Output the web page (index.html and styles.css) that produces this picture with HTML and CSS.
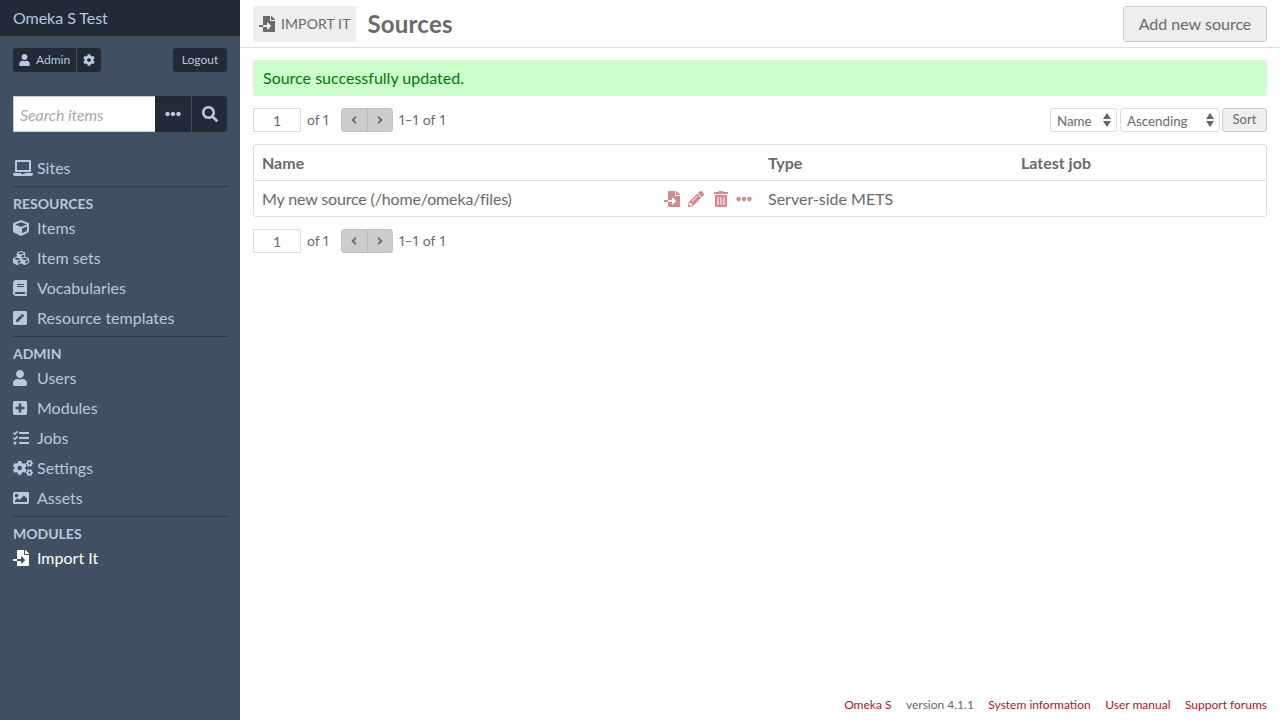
FILE: index.html
```html
<!DOCTYPE html>
<html lang="en">
<head>
<meta charset="utf-8">
<title>Sources · Omeka S Test</title>
<link rel="stylesheet" href="styles.css">
</head>
<body>
<svg class="defs" aria-hidden="true">
<symbol id="i-user" viewBox="0 0 448 512"><path d="M224 256c70.7 0 128-57.3 128-128S294.7 0 224 0 96 57.3 96 128s57.3 128 128 128zm89.6 32h-16.7c-22.2 10.2-46.9 16-72.9 16s-50.6-5.8-72.9-16h-16.7C60.2 288 0 348.2 0 422.4V464c0 26.5 21.5 48 48 48h352c26.5 0 48-21.5 48-48v-41.6c0-74.2-60.2-134.4-134.4-134.4z"/></symbol>
<symbol id="i-search" viewBox="0 0 512 512"><path d="M505 442.7L405.3 343c-4.5-4.5-10.6-7-17-7H372c27.6-35.3 44-79.7 44-128C416 93.1 322.9 0 208 0S0 93.1 0 208s93.1 208 208 208c48.3 0 92.7-16.4 128-44v16.3c0 6.4 2.5 12.5 7 17l99.7 99.7c9.4 9.4 24.6 9.4 33.9 0l28.3-28.3c9.4-9.4 9.4-24.6.1-34zM208 336c-70.7 0-128-57.2-128-128 0-70.7 57.2-128 128-128 70.7 0 128 57.2 128 128 0 70.7-57.2 128-128 128z"/></symbol>
<symbol id="i-dots" viewBox="0 0 512 512"><path d="M328 256c0 39.8-32.2 72-72 72s-72-32.2-72-72 32.2-72 72-72 72 32.2 72 72zm104-72c-39.8 0-72 32.2-72 72s32.2 72 72 72 72-32.2 72-72-32.2-72-72-72zm-352 0c-39.8 0-72 32.2-72 72s32.2 72 72 72 72-32.2 72-72-32.2-72-72-72z"/></symbol>
<symbol id="i-import" viewBox="0 0 512 512"><path d="M16 288c-8.8 0-16 7.2-16 16v32c0 8.8 7.2 16 16 16h112v-64zm489-183L407.1 7c-4.5-4.5-10.6-7-17-7H384v128h128v-6.1c0-6.3-2.5-12.4-7-16.9zm-153 31V0H152c-13.3 0-24 10.7-24 24v264h128v-65.2c0-14.3 17.3-21.4 27.4-11.3L379 308c6.6 6.7 6.6 17.4 0 24l-95.7 96.4c-10.1 10.1-27.4 3-27.4-11.3V352H128v136c0 13.3 10.7 24 24 24h336c13.3 0 24-10.7 24-24V160H376c-13.2 0-24-10.8-24-24z"/></symbol>
<symbol id="i-pencil" viewBox="0 0 512 512"><path d="M497.9 142.1l-46.1 46.1c-4.7 4.7-12.3 4.7-17 0l-111-111c-4.7-4.7-4.7-12.3 0-17l46.1-46.1c18.7-18.7 49.1-18.7 67.9 0l60.1 60.1c18.8 18.7 18.8 49.1 0 67.9zM284.2 99.8L21.6 362.4.4 483.9c-2.9 16.4 11.4 30.6 27.8 27.8l121.5-21.3 262.6-262.6c4.7-4.7 4.7-12.3 0-17l-111-111c-4.8-4.7-12.4-4.7-17.1 0zM124.1 339.9c-5.5-5.5-5.5-14.3 0-19.8l154-154c5.5-5.5 14.3-5.5 19.8 0s5.5 14.3 0 19.8l-154 154c-5.5 5.5-14.3 5.5-19.8 0zM88 424h48v36.3l-64.5 11.3-31.1-31.1L51.7 376H88v48z"/></symbol>
<symbol id="i-trash" viewBox="0 0 448 512"><path d="M32 464a48 48 0 0 0 48 48h288a48 48 0 0 0 48-48V128H32zm272-256a16 16 0 0 1 32 0v224a16 16 0 0 1-32 0zm-96 0a16 16 0 0 1 32 0v224a16 16 0 0 1-32 0zm-96 0a16 16 0 0 1 32 0v224a16 16 0 0 1-32 0zM432 32H312l-9.4-18.7A24 24 0 0 0 281.1 0H166.8a23.72 23.72 0 0 0-21.4 13.3L136 32H16A16 16 0 0 0 0 48v32a16 16 0 0 0 16 16h416a16 16 0 0 0 16-16V48a16 16 0 0 0-16-16z"/></symbol>
<symbol id="i-laptop" viewBox="0 0 640 512"><path d="M624 416H381.54c-.74 19.81-14.71 32-32.74 32H288c-18.69 0-33.02-17.47-32.77-32H16c-8.8 0-16 7.2-16 16v16c0 35.2 28.8 64 64 64h512c35.2 0 64-28.8 64-64v-16c0-8.8-7.2-16-16-16zM576 48c0-26.4-21.6-48-48-48H112C85.6 0 64 21.6 64 48v336h512V48zm-64 272H128V64h384v256z"/></symbol>
<symbol id="i-cube" viewBox="0 0 512 512"><path d="M239.1 6.3l-208 78c-18.7 7-31.1 25-31.1 45v225.1c0 18.2 10.3 34.8 26.5 42.9l208 104c13.5 6.8 29.4 6.8 42.9 0l208-104c16.3-8.1 26.5-24.8 26.5-42.9V129.3c0-20-12.4-37.9-31.1-44.9l-208-78C262 2.2 250 2.2 239.1 6.3zM256 68.4l192 72v1.1l-192 78-192-78v-1.1l192-72zm32 356V275.5l160-65v133.9l-160 80z"/></symbol>
<symbol id="i-cubes" viewBox="0 0 512 512"><path d="M488.6 250.2L392 214V105.5c0-15-9.3-28.4-23.4-33.7l-100-37.5c-8.1-3.1-17.1-3.1-25.3 0l-100 37.5c-14.1 5.3-23.4 18.7-23.4 33.7V214l-96.6 36.2C9.3 255.5 0 268.9 0 283.9V394c0 13.6 7.7 26.1 19.9 32.2l100 50c10.1 5.1 22.1 5.1 32.2 0l103.9-52 103.9 52c10.1 5.1 22.1 5.1 32.2 0l100-50c12.2-6.1 19.9-18.6 19.9-32.2V283.9c0-15-9.3-28.4-23.4-33.7zM358 214.8l-85 31.9v-68.2l85-37v73.3zM154 104.1l102-38.2 102 38.2v.6l-102 41.4-102-41.4v-.6zm84 291.1l-85 42.5v-79.1l85-38.8v75.4zm0-112l-102 41.4-102-41.4v-.6l102-38.2 102 38.2v.6zm240 112l-85 42.5v-79.1l85-38.8v75.4zm0-112l-102 41.4-102-41.4v-.6l102-38.2 102 38.2v.6z"/></symbol>
<symbol id="i-book" viewBox="0 0 448 512"><path d="M448 360V24c0-13.3-10.7-24-24-24H96C43 0 0 43 0 96v320c0 53 43 96 96 96h328c13.3 0 24-10.7 24-24v-16c0-7.5-3.5-14.3-8.9-18.7-4.2-15.4-4.2-59.3 0-74.7 5.4-4.3 8.9-11.1 8.9-18.6zM128 134c0-3.3 2.7-6 6-6h212c3.3 0 6 2.7 6 6v20c0 3.3-2.7 6-6 6H134c-3.3 0-6-2.7-6-6v-20zm0 64c0-3.3 2.7-6 6-6h212c3.3 0 6 2.7 6 6v20c0 3.3-2.7 6-6 6H134c-3.3 0-6-2.7-6-6v-20zm253.4 250H96c-17.7 0-32-14.3-32-32 0-17.6 14.4-32 32-32h285.4c-1.9 17.1-1.9 46.9 0 64z"/></symbol>
<symbol id="i-pensq" viewBox="0 0 448 512"><path d="M400 480H48c-26.5 0-48-21.5-48-48V80c0-26.5 21.5-48 48-48h352c26.5 0 48 21.5 48 48v352c0 26.5-21.5 48-48 48zM238.1 177.9L102.4 313.6l-6.3 57.1c-.8 7.6 5.6 14.1 13.3 13.3l57.1-6.3L302.2 242c2.3-2.3 2.3-6.1 0-8.5L246.7 178c-2.5-2.4-6.3-2.4-8.6-.1zM345 165.1L314.9 135c-9.4-9.4-24.6-9.4-33.9 0l-23.1 23.1c-2.3 2.3-2.3 6.1 0 8.5l55.5 55.5c2.3 2.3 6.1 2.3 8.5 0L345 199c9.3-9.3 9.3-24.5 0-33.9z"/></symbol>
<symbol id="i-plus" viewBox="0 0 448 512"><path d="M400 32H48C21.5 32 0 53.5 0 80v352c0 26.5 21.5 48 48 48h352c26.5 0 48-21.5 48-48V80c0-26.5-21.5-48-48-48zm-32 252c0 6.6-5.4 12-12 12h-92v92c0 6.6-5.4 12-12 12h-56c-6.6 0-12-5.4-12-12v-92H92c-6.6 0-12-5.4-12-12v-56c0-6.6 5.4-12 12-12h92v-92c0-6.6 5.4-12 12-12h56c6.6 0 12 5.4 12 12v92h92c6.6 0 12 5.4 12 12v56z"/></symbol>
<symbol id="i-tasks" viewBox="0 0 512 512"><path d="M139.61 35.5a12 12 0 0 0-17 0L58.93 98.81l-22.7-22.12a12 12 0 0 0-17 0L3.53 92.41a12 12 0 0 0 0 17l47.59 47.4a12.78 12.78 0 0 0 17.61 0l15.59-15.62L156.52 69a12.09 12.09 0 0 0 .09-17zm0 159.19a12 12 0 0 0-17 0l-63.68 63.72-22.7-22.1a12 12 0 0 0-17 0L3.53 252a12 12 0 0 0 0 17L51 316.5a12.77 12.77 0 0 0 17.6 0l15.7-15.69 72.2-72.22a12 12 0 0 0 .09-16.9zM64 368c-26.49 0-48.59 21.5-48.59 48S37.53 464 64 464a48 48 0 0 0 0-96zm432 16H208a16 16 0 0 0-16 16v32a16 16 0 0 0 16 16h288a16 16 0 0 0 16-16v-32a16 16 0 0 0-16-16zm0-320H208a16 16 0 0 0-16 16v32a16 16 0 0 0 16 16h288a16 16 0 0 0 16-16V80a16 16 0 0 0-16-16zm0 160H208a16 16 0 0 0-16 16v32a16 16 0 0 0 16 16h288a16 16 0 0 0 16-16v-32a16 16 0 0 0-16-16z"/></symbol>
<symbol id="i-cogs" viewBox="0 0 640 512"><path d="M512.1 191l-8.2 14.3c-3 5.3-9.4 7.5-15.1 5.4-11.8-4.4-22.6-10.7-32.1-18.6-4.6-3.8-5.8-10.5-2.8-15.7l8.2-14.3c-6.9-8-12.3-17.3-15.9-27.4h-16.5c-6 0-11.2-4.3-12.2-10.3-2-12-2.1-24.6 0-37.1 1-6 6.2-10.4 12.2-10.4h16.5c3.6-10.1 9-19.4 15.9-27.4l-8.2-14.3c-3-5.2-1.9-11.9 2.8-15.7 9.5-7.9 20.4-14.2 32.1-18.6 5.7-2.1 12.1.1 15.1 5.4l8.2 14.3c10.5-1.9 21.2-1.9 31.7 0L552 6.3c3-5.3 9.4-7.5 15.1-5.4 11.8 4.4 22.6 10.7 32.1 18.6 4.6 3.8 5.8 10.5 2.8 15.7l-8.2 14.3c6.9 8 12.3 17.3 15.9 27.4h16.5c6 0 11.2 4.3 12.2 10.3 2 12 2.1 24.6 0 37.1-1 6-6.2 10.4-12.2 10.4h-16.5c-3.6 10.1-9 19.4-15.9 27.4l8.2 14.3c3 5.2 1.9 11.9-2.8 15.7-9.5 7.9-20.4 14.2-32.1 18.6-5.7 2.1-12.1-.1-15.1-5.4l-8.2-14.3c-10.4 1.9-21.2 1.9-31.7 0zm-10.5-58.8c38.5 29.6 82.4-14.3 52.8-52.8-38.5-29.7-82.4 14.3-52.8 52.8zM386.3 286.1l33.7 16.8c10.1 5.8 14.5 18.1 10.5 29.1-8.9 24.2-26.4 46.4-42.6 65.8-7.4 8.9-20.2 11.1-30.3 5.3l-29.1-16.8c-16 13.7-34.6 24.6-54.9 31.7v33.6c0 11.6-8.3 21.6-19.7 23.6-24.6 4.2-50.4 4.4-75.9 0-11.5-2-20-11.9-20-23.6V418c-20.3-7.2-38.9-18-54.9-31.7L74 403c-10 5.8-22.9 3.6-30.3-5.3-16.2-19.4-33.3-41.6-42.2-65.7-4-10.9.4-23.2 10.5-29.1l33.3-16.8c-3.9-20.9-3.9-42.4 0-63.4L12 205.8c-10.1-5.8-14.6-18.1-10.5-29 8.9-24.2 26-46.4 42.2-65.8 7.4-8.9 20.2-11.1 30.3-5.3l29.1 16.8c16-13.7 34.6-24.6 54.9-31.7V57.1c0-11.5 8.2-21.5 19.6-23.5 24.6-4.2 50.5-4.4 76-.1 11.5 2 20 11.9 20 23.6v33.6c20.3 7.2 38.9 18 54.9 31.7l29.1-16.8c10-5.8 22.9-3.6 30.3 5.3 16.2 19.4 33.2 41.6 42.1 65.8 4 10.9.1 23.2-10 29.1l-33.7 16.8c3.9 21 3.9 42.5 0 63.5zm-117.6 21.1c59.2-77-28.7-164.9-105.7-105.7-59.2 77 28.7 164.9 105.7 105.7zm243.4 182.7l-8.2 14.3c-3 5.3-9.4 7.5-15.1 5.4-11.8-4.4-22.6-10.7-32.1-18.6-4.6-3.8-5.8-10.5-2.8-15.7l8.2-14.3c-6.9-8-12.3-17.3-15.9-27.4h-16.5c-6 0-11.2-4.3-12.2-10.3-2-12-2.1-24.6 0-37.1 1-6 6.2-10.4 12.2-10.4h16.5c3.6-10.1 9-19.4 15.9-27.4l-8.2-14.3c-3-5.2-1.9-11.9 2.8-15.7 9.5-7.9 20.4-14.2 32.1-18.6 5.7-2.1 12.1.1 15.1 5.4l8.2 14.3c10.5-1.9 21.2-1.9 31.7 0l8.2-14.3c3-5.3 9.4-7.5 15.1-5.4 11.8 4.4 22.6 10.7 32.1 18.6 4.6 3.8 5.8 10.5 2.8 15.7l-8.2 14.3c6.9 8 12.3 17.3 15.9 27.4h16.5c6 0 11.2 4.3 12.2 10.3 2 12 2.1 24.6 0 37.1-1 6-6.2 10.4-12.2 10.4h-16.5c-3.6 10.1-9 19.4-15.9 27.4l8.2 14.3c3 5.2 1.9 11.9-2.8 15.7-9.5 7.9-20.4 14.2-32.1 18.6-5.7 2.1-12.1-.1-15.1-5.4l-8.2-14.3c-10.4 1.9-21.2 1.9-31.7 0zM501.6 431c38.5 29.6 82.4-14.3 52.8-52.8-38.5-29.6-82.4 14.3-52.8 52.8z"/></symbol>
<symbol id="i-image" viewBox="0 0 512 512"><path d="M464 448H48c-26.51 0-48-21.49-48-48V112c0-26.51 21.49-48 48-48h416c26.51 0 48 21.49 48 48v288c0 26.51-21.49 48-48 48zM112 120c-30.928 0-56 25.072-56 56s25.072 56 56 56 56-25.072 56-56-25.072-56-56-56zM64 384h384V272l-87.515-87.515c-4.686-4.686-12.284-4.686-16.971 0L208 320l-55.515-55.515c-4.686-4.686-12.284-4.686-16.971 0L64 336v48z"/></symbol>
<symbol id="i-cog" viewBox="0 0 512 512"><path d="M487.4 315.7l-42.6-24.6c4.3-23.2 4.3-47 0-70.2l42.6-24.6c4.9-2.8 7.1-8.6 5.5-14-11.1-35.6-30-67.8-54.7-94.6-3.8-4.1-10-5.1-14.8-2.3L380.8 110c-17.9-15.4-38.5-27.3-60.8-35.1V25.8c0-5.6-3.9-10.5-9.4-11.7-36.7-8.2-74.3-7.8-109.2 0-5.5 1.2-9.4 6.1-9.4 11.7V75c-22.2 7.9-42.8 19.8-60.8 35.1L88.7 85.5c-4.9-2.8-11-1.9-14.8 2.3-24.7 26.7-43.6 58.9-54.7 94.6-1.7 5.4.6 11.2 5.5 14L67.3 221c-4.3 23.2-4.3 47 0 70.2l-42.6 24.6c-4.9 2.8-7.1 8.6-5.5 14 11.1 35.6 30 67.8 54.7 94.6 3.8 4.1 10 5.1 14.8 2.3l42.6-24.6c17.9 15.4 38.5 27.3 60.8 35.1v49.2c0 5.6 3.9 10.5 9.4 11.7 36.7 8.2 74.3 7.8 109.2 0 5.5-1.2 9.4-6.1 9.4-11.7v-49.2c22.2-7.9 42.8-19.8 60.8-35.1l42.6 24.6c4.9 2.8 11 1.9 14.8-2.3 24.7-26.7 43.6-58.9 54.7-94.6 1.5-5.5-.7-11.3-5.6-14.1zM256 336c-44.1 0-80-35.9-80-80s35.9-80 80-80 80 35.9 80 80-35.9 80-80 80z"/></symbol>
<symbol id="i-left" viewBox="0 0 256 512"><path d="M31.7 239l136-136c9.4-9.4 24.6-9.4 33.9 0l22.6 22.6c9.4 9.4 9.4 24.6 0 33.9L127.9 256l96.4 96.4c9.4 9.4 9.4 24.6 0 33.9L201.7 409c-9.4 9.4-24.6 9.4-33.9 0l-136-136c-9.5-9.4-9.5-24.6-.1-34z"/></symbol>
<symbol id="i-right" viewBox="0 0 256 512"><path d="M224.3 273l-136 136c-9.4 9.4-24.6 9.4-33.9 0l-22.6-22.6c-9.4-9.4-9.4-24.6 0-33.9l96.4-96.4-96.4-96.4c-9.4-9.4-9.4-24.6 0-33.9L54.3 103c9.4-9.4 24.6-9.4 33.9 0l136 136c9.5 9.4 9.5 24.6.1 34z"/></symbol>
</svg>

<div class="app">
  <aside class="sidebar">
    <div class="site-title">Omeka S Test</div>
    <div class="user-bar">
      <div class="user-group">
        <a class="dark-btn user-btn"><svg class="ic-user"><use href="#i-user"/></svg>Admin</a>
        <a class="dark-btn cog-btn"><svg class="ic-cog"><use href="#i-cog"/></svg></a>
      </div>
      <a class="dark-btn logout">Logout</a>
    </div>
    <form class="search">
      <input class="search-input" type="text" placeholder="Search items">
      <span class="search-btn more"><svg class="ic-more"><use href="#i-dots"/></svg></span>
      <span class="search-btn go"><svg class="ic-go"><use href="#i-search"/></svg></span>
    </form>
    <nav class="nav">
      <a class="nav-item"><span class="nav-icon"><svg class="w20"><use href="#i-laptop"/></svg></span>Sites</a>
      <section class="nav-section">
        <h4 class="nav-heading">Resources</h4>
        <a class="nav-item"><span class="nav-icon"><svg class="w16"><use href="#i-cube"/></svg></span>Items</a>
        <a class="nav-item"><span class="nav-icon"><svg class="w16"><use href="#i-cubes"/></svg></span>Item sets</a>
        <a class="nav-item"><span class="nav-icon"><svg class="w14"><use href="#i-book"/></svg></span>Vocabularies</a>
        <a class="nav-item"><span class="nav-icon"><svg class="w14"><use href="#i-pensq"/></svg></span>Resource templates</a>
      </section>
      <section class="nav-section">
        <h4 class="nav-heading">Admin</h4>
        <a class="nav-item"><span class="nav-icon"><svg class="w14"><use href="#i-user"/></svg></span>Users</a>
        <a class="nav-item"><span class="nav-icon"><svg class="w14"><use href="#i-plus"/></svg></span>Modules</a>
        <a class="nav-item"><span class="nav-icon"><svg class="w16"><use href="#i-tasks"/></svg></span>Jobs</a>
        <a class="nav-item"><span class="nav-icon"><svg class="w20"><use href="#i-cogs"/></svg></span>Settings</a>
        <a class="nav-item"><span class="nav-icon"><svg class="w16"><use href="#i-image"/></svg></span>Assets</a>
      </section>
      <section class="nav-section">
        <h4 class="nav-heading">Modules</h4>
        <a class="nav-item active"><span class="nav-icon"><svg class="w16"><use href="#i-import"/></svg></span>Import It</a>
      </section>
    </nav>
  </aside>

  <main class="main">
    <header class="page-head">
      <div class="crumb"><svg class="crumb-ic"><use href="#i-import"/></svg>IMPORT IT</div>
      <h1 class="page-title">Sources</h1>
      <a class="add-btn">Add new source</a>
    </header>
    <div class="content">
      <div class="message">Source successfully updated.</div>
      <div class="toolbar">
        <div class="pager">
          <input class="page-input" type="text" value="1">
          <span class="of">of 1</span>
          <span class="pager-btns">
            <span class="pager-btn"><svg><use href="#i-left"/></svg></span>
            <span class="pager-btn"><svg><use href="#i-right"/></svg></span>
          </span>
          <span class="range">1–1 of 1</span>
        </div>
        <div class="sorter">
          <select class="sort-select name"><option>Name</option></select>
          <select class="sort-select order"><option>Ascending</option></select>
          <span class="sort-btn">Sort</span>
        </div>
      </div>
      <table class="table">
        <thead>
          <tr><th class="c-name">Name</th><th class="c-type">Type</th><th>Latest job</th></tr>
        </thead>
        <tbody>
          <tr>
            <td>
              <div class="name-cell">
                <span class="source-name">My new source (/home/omeka/files)</span>
                <span class="actions">
                  <svg class="a-import"><use href="#i-import"/></svg>
                  <svg class="a-pencil"><use href="#i-pencil"/></svg>
                  <svg class="a-trash"><use href="#i-trash"/></svg>
                  <svg class="a-dots"><use href="#i-dots"/></svg>
                </span>
              </div>
            </td>
            <td>Server-side METS</td>
            <td></td>
          </tr>
        </tbody>
      </table>
      <div class="pager bottom">
        <input class="page-input" type="text" value="1">
        <span class="of">of 1</span>
        <span class="pager-btns">
          <span class="pager-btn"><svg><use href="#i-left"/></svg></span>
          <span class="pager-btn"><svg><use href="#i-right"/></svg></span>
        </span>
        <span class="range">1–1 of 1</span>
      </div>
    </div>
    <footer class="footer">
      <a>Omeka S</a>
      <span>version 4.1.1</span>
      <a>System information</a>
      <a>User manual</a>
      <a>Support forums</a>
    </footer>
  </main>
</div>
</body>
</html>
```

FILE: styles.css
```css
* { box-sizing: border-box; }
html, body { margin: 0; height: 100%; }
body {
  font-family: Lato, "Open Sans", sans-serif;
  font-size: 16px;
  color: #6a6a6a;
  background: #fff;
  overflow: hidden;
}
svg { fill: currentColor; display: block; }
.defs { position: absolute; width: 0; height: 0; }
.app { display: flex; height: 720px; }

/* sidebar */
.sidebar {
  width: 240px;
  flex: none;
  background: #404f62;
  color: #b8c8de;
}
.site-title {
  height: 36px;
  padding-left: 13px;
  line-height: 36px;
  background: #212a36;
  color: #b8c8de;
  font-size: 16px;
  letter-spacing: -0.05px;
}
.user-bar {
  display: flex;
  justify-content: space-between;
  padding: 12px 13px 0;
}
.user-group { display: flex; gap: 1px; }
.dark-btn {
  display: flex;
  align-items: center;
  height: 24px;
  padding-bottom: 2px;
  background: #212a36;
  border-radius: 3px;
  font-size: 12px;
  color: #b8c8de;
}
.user-btn { width: 63px; padding-left: 6px; border-radius: 3px 0 0 3px; }
.ic-user { width: 11px; height: 12px; margin: 2px 6px 0 0; }
.cog-btn { width: 24px; padding-bottom: 0; justify-content: center; border-radius: 0 3px 3px 0; }
.ic-cog { width: 12px; height: 12px; }
.logout { width: 54px; justify-content: center; }
.search { display: flex; padding: 24px 13px 0; }
.search-input {
  width: 142px;
  height: 36px;
  padding: 0 6px;
  border: 1px solid #ccc;
  border-right: 0;
  background: #fff;
  font: italic 16px Lato, sans-serif;
  letter-spacing: -0.08px;
  outline: none;
}
.search-input::placeholder { color: #aaa; opacity: 1; }
.search-btn {
  display: flex;
  align-items: center;
  justify-content: center;
  height: 36px;
  background: #212a36;
  color: #b8c8de;
}
.more { width: 37px; padding-right: 1px; border-right: 1px solid #404e61; }
.ic-more { width: 16px; height: 16px; }
.go { width: 35px; border-radius: 0 3px 3px 0; }
.ic-go { width: 16px; height: 16px; }

.nav { padding: 20px 12px 0 13px; }
.nav-item {
  display: flex;
  align-items: center;
  height: 30px;
  color: #b8c8de;
  white-space: nowrap;
}
.nav-icon { width: 24px; flex: none; padding-top: 2px; }
.w20 { width: 20px; height: 16px; }
.w16 { width: 16px; height: 16px; }
.w14 { width: 14px; height: 16px; }
.nav-item.active { color: #fff; }
.nav-section { border-top: 1px solid #2f3a49; margin-top: 4px; padding-top: 7px; }
.nav-heading {
  margin: 0;
  height: 18px;
  line-height: 20px;
  font-size: 14px;
  font-weight: 700;
  text-transform: uppercase;
  color: #b8c8de;
}

/* main */
.main { flex: 1; min-width: 0; display: flex; flex-direction: column; }
.page-head {
  display: flex;
  align-items: center;
  height: 48px;
  padding: 0 13px;
  border-bottom: 1px solid #ddd;
}
.crumb {
  display: flex;
  align-items: center;
  height: 36px;
  padding: 0 5px 0 6px;
  background: #eee;
  font-size: 14px;
  letter-spacing: 0.1px;
}
.crumb-ic { width: 16px; height: 16px; margin-right: 6px; }
.page-title { margin: 0 0 0 12px; font-size: 24px; font-weight: 700; letter-spacing: 0.2px; }
.add-btn {
  margin-left: auto;
  display: flex;
  align-items: center;
  justify-content: center;
  width: 144px;
  height: 36px;
  background: #eee;
  border: 1px solid #ccc;
  border-radius: 3px;
}
.content { padding: 12px 13px 0; flex: 1; }
.message {
  height: 36px;
  line-height: 36px;
  padding-left: 10px;
  background: #cfc;
  color: #070;
  border-radius: 3px;
}
.toolbar { display: flex; justify-content: space-between; margin-top: 12px; }
.pager { display: flex; align-items: center; height: 24px; font-size: 14px; font-variant-numeric: proportional-nums; }
.pager.bottom { margin-top: 12px; }
.page-input {
  width: 48px;
  height: 24px;
  border: 1px solid #ddd;
  padding: 0;
  text-align: center;
  font: 14px Lato, sans-serif;
  color: #6a6a6a;
  outline: none;
}
.of { width: 22px; margin: 0 12px 2px 6px; white-space: nowrap; }
.pager-btns { display: flex; width: 52px; height: 24px; background: #ccc; border: 1px solid #c4c4c4; border-radius: 3px; }
.pager-btn { flex: 1; display: flex; align-items: center; justify-content: center; }
.pager-btn + .pager-btn { border-left: 1px solid #bbb; }
.pager-btn svg { width: 6px; height: 12px; }
.range { margin: 0 0 2px 6px; word-spacing: 1px; }
.sorter { display: flex; align-items: center; font-size: 13px; }
.sort-select {
  appearance: none;
  height: 24px;
  padding: 1px 0 0 6px;
  border: 1px solid #ddd;
  border-radius: 3px;
  font: 13.33px Lato, sans-serif;
  color: #6a6a6a;
  background: #fff url("data:image/svg+xml,%3Csvg xmlns='http://www.w3.org/2000/svg' width='8' height='14'%3E%3Cpath d='M4 0l4 6H0zM4 14L0 8h8z' fill='%23666'/%3E%3C/svg%3E") no-repeat right 5px center;
  outline: none;
}
.name { width: 67px; margin-right: 3px; }
.order { width: 100px; margin-right: 2px; }
.sort-btn {
  display: flex;
  align-items: center;
  justify-content: center;
  width: 45px;
  height: 24px;
  padding-bottom: 2px;
  background: #eee;
  border: 1px solid #ccc;
  border-radius: 3px;
}
.table {
  width: 100%;
  margin-top: 12px;
  border-collapse: separate;
  border-spacing: 0;
  border: 1px solid #ddd;
  border-radius: 3px;
  table-layout: fixed;
}
.table th {
  height: 36px;
  padding: 0 8px;
  text-align: left;
  font-weight: 700;
  border-bottom: 1px solid #ddd;
}
.table td { height: 35px; padding: 0 8px; }
.c-name { width: 506px; }
.c-type { width: 253px; }
.name-cell { display: flex; align-items: center; justify-content: space-between; }
.source-name { letter-spacing: -0.15px; }
.actions { display: flex; align-items: center; color: #d28a8d; }
.actions svg { height: 16px; }
.a-import { width: 16px; margin-right: 8px; }
.a-pencil { width: 16px; margin-right: 10px; }
.a-trash { width: 14px; margin-right: 8px; }
.a-dots { width: 16px; }

.footer {
  display: flex;
  justify-content: flex-end;
  gap: 14.5px;
  height: 30px;
  padding: 0 13px;
  line-height: 30px;
  font-size: 12px;
}
.footer a { color: #a91919; }
```
